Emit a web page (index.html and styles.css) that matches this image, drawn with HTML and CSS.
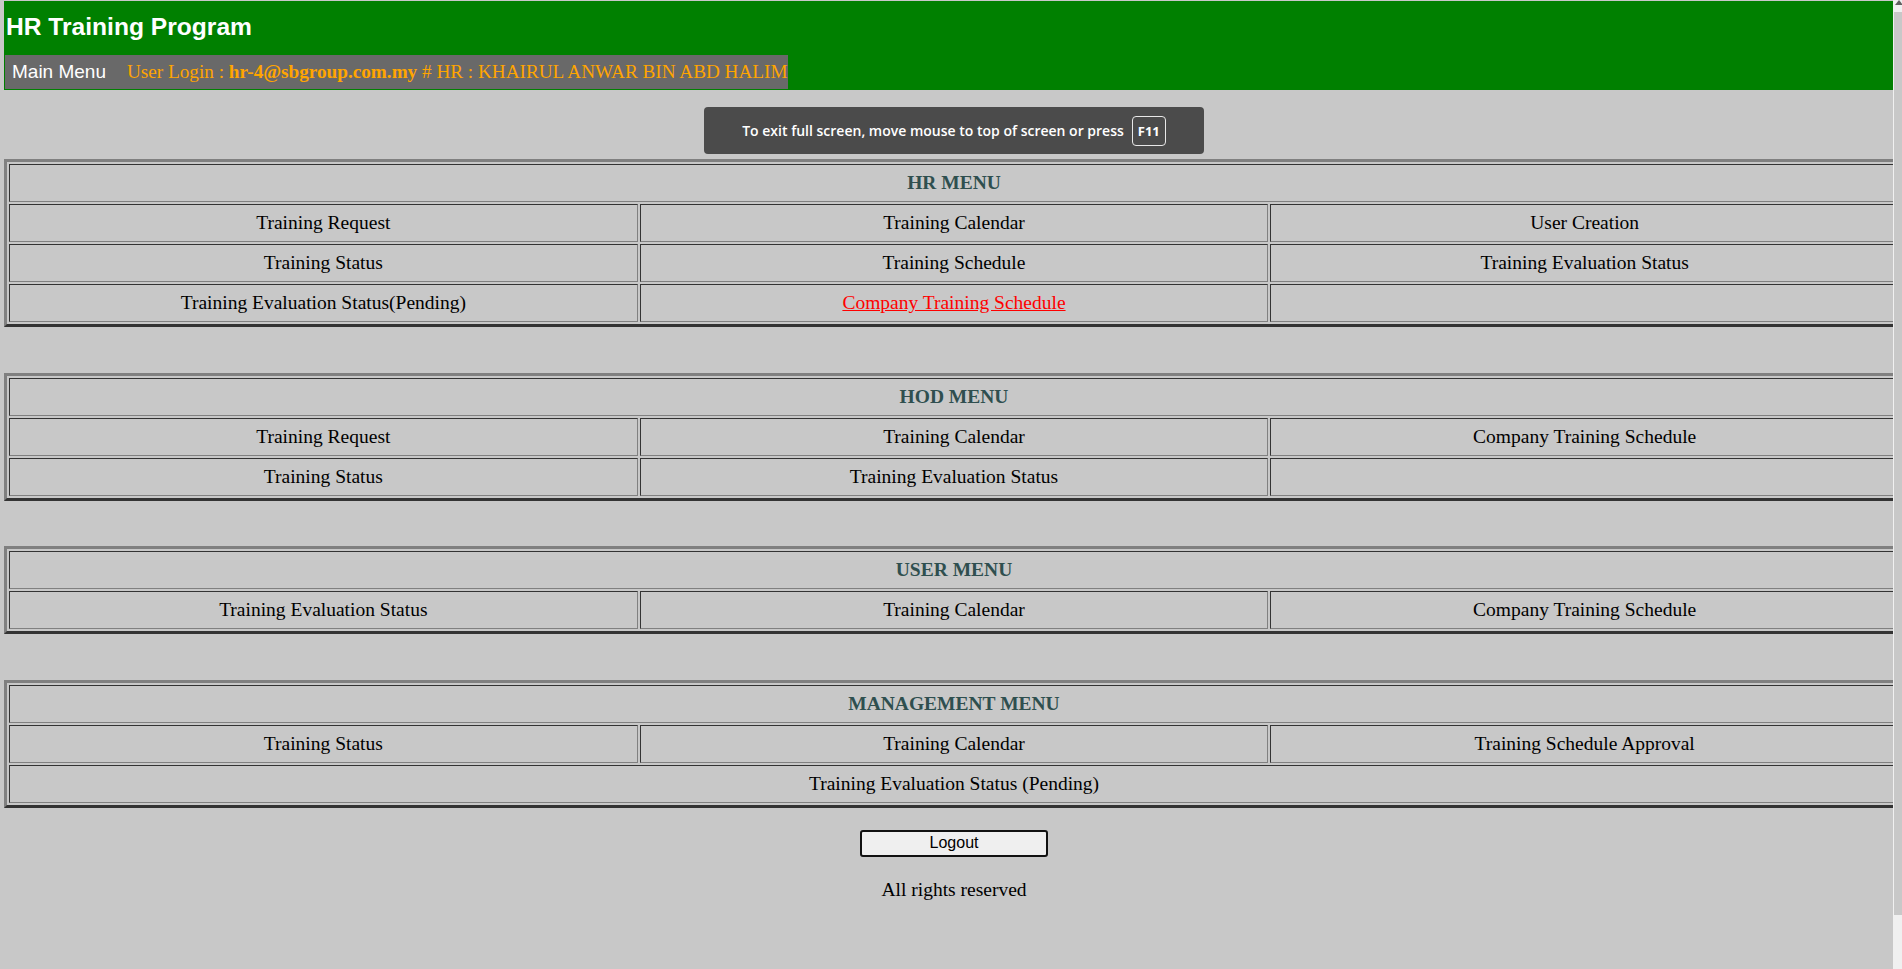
FILE: index.html
```html
<!DOCTYPE html>
<html lang="en">
<head>
<meta charset="utf-8">
<title>HR Training Program</title>
<link rel="stylesheet" href="styles.css">
</head>
<body>
<div class="screen">
  <div class="page">
    <div class="content">
      <header class="topbar">
        <div class="title">HR Training Program</div>
        <div class="navbar">
          <span class="nav-main">Main Menu</span>
          <span class="login">User Login : <b>hr-4@sbgroup.com.my</b> # HR : KHAIRUL ANWAR BIN ABD HALIM</span>
        </div>
      </header>

      <div class="toast">
        <span class="toast-text">To exit full screen, move mouse to top of screen or press</span>
        <span class="key">F11</span>
      </div>

      <table class="menu first">
        <tr><th colspan="3">HR MENU</th></tr>
        <tr><td>Training Request</td><td>Training Calendar</td><td>User Creation</td></tr>
        <tr><td>Training Status</td><td>Training Schedule</td><td>Training Evaluation Status</td></tr>
        <tr><td>Training Evaluation Status(Pending)</td><td><a class="link" href="#">Company Training Schedule</a></td><td></td></tr>
      </table>

      <table class="menu">
        <tr><th colspan="3">HOD MENU</th></tr>
        <tr><td>Training Request</td><td>Training Calendar</td><td>Company Training Schedule</td></tr>
        <tr><td>Training Status</td><td>Training Evaluation Status</td><td></td></tr>
      </table>

      <table class="menu">
        <tr><th colspan="3">USER MENU</th></tr>
        <tr><td>Training Evaluation Status</td><td>Training Calendar</td><td>Company Training Schedule</td></tr>
      </table>

      <table class="menu">
        <tr><th colspan="3">MANAGEMENT MENU</th></tr>
        <tr><td>Training Status</td><td>Training Calendar</td><td>Training Schedule Approval</td></tr>
        <tr><td colspan="3">Training Evaluation Status (Pending)</td></tr>
      </table>

      <div class="footer">
        <button class="logout" type="button">Logout</button>
        <p class="rights">All rights reserved</p>
      </div>
    </div>
  </div>
  <div class="scrollbar">
    <div class="sb-edge"></div>
    <div class="sb-main">
      <div class="sb-top">
        <svg class="sb-arrow" width="8" height="6" viewBox="0 0 8 6"><path d="M5 0 L9 5 L1 5 Z" fill="#606060"/></svg>
      </div>
      <div class="sb-thumb"></div>
      <div class="sb-track"></div>
    </div>
  </div>
</div>
</body>
</html>
```

FILE: styles.css
```css
html, body {
  margin: 0;
  padding: 0;
}

body {
  background: #c8c8c8;
  overflow: hidden;
  font-family: "Liberation Serif", "Times New Roman", serif;
}

.screen {
  display: flex;
  height: 969px;
  overflow: hidden;
}

.page {
  flex: 1;
  min-width: 0;
  overflow: hidden;
}

.content {
  position: relative;
  width: 1900px;
  margin-left: 4px;
  padding-top: 1px;
}

/* header */
.topbar {
  background: #008000;
  padding: 12px 1px 1px 1px;
}

.title {
  font-family: "Liberation Sans", Arial, sans-serif;
  font-weight: bold;
  font-size: 24.6px;
  line-height: 28px;
  color: #ffffff;
  padding-left: 1px;
  margin-bottom: 14px;
}

.navbar {
  display: flex;
  align-items: center;
  gap: 21px;
  width: fit-content;
  height: 34px;
  background: #696969;
  padding: 0 1px 0 7px;
}

.nav-main {
  font-family: "Liberation Sans", Arial, sans-serif;
  font-size: 19px;
  color: #ffffff;
}

.login {
  font-family: "Liberation Serif", "Times New Roman", serif;
  font-size: 19.2px;
  color: #ffa500;
  white-space: nowrap;
}

/* fullscreen notice overlay */
.toast {
  position: absolute;
  top: 107px;
  left: 50%;
  transform: translateX(-50%);
  width: 500px;
  height: 47px;
  box-sizing: border-box;
  background: #4b4b4b;
  border-radius: 4px;
  display: flex;
  align-items: center;
  justify-content: center;
  gap: 8px;
  font-family: "Open Sans", "Liberation Sans", sans-serif;
  font-weight: 600;
  font-size: 14px;
  color: #ffffff;
}

.key {
  display: flex;
  align-items: center;
  justify-content: center;
  width: 34px;
  height: 30px;
  box-sizing: border-box;
  border: 1px solid #e8e8e8;
  border-radius: 4px;
  font-weight: 700;
  font-size: 13px;
}

/* menu tables */
.menu {
  width: 1900px;
  table-layout: fixed;
  border-collapse: separate;
  border-spacing: 2px;
  border: 3px solid;
  border-color: #808080 #333333 #333333 #808080;
  margin-top: 45.6px;
}

.menu.first {
  margin-top: 69px;
}

.menu th,
.menu td {
  border: 1px solid;
  border-color: #333333 #808080 #808080 #333333;
  padding: 0;
  height: 36px;
  line-height: 36px;
  text-align: center;
  font-family: "Liberation Serif", "Times New Roman", serif;
  font-size: 19.5px;
  color: #000000;
  white-space: nowrap;
}

.menu th {
  color: #2f4f4f;
  font-weight: bold;
}

.link {
  color: #ff0000;
  text-decoration: underline;
}

/* footer */
.footer {
  display: flex;
  flex-direction: column;
  align-items: center;
  padding-top: 22px;
}

.logout {
  width: 188px;
  height: 27px;
  box-sizing: border-box;
  background: #efefef;
  border: 2px solid #111111;
  border-radius: 3px;
  font-family: "Liberation Sans", Arial, sans-serif;
  font-size: 16px;
  color: #000000;
  padding: 0;
}

.rights {
  margin: 22px 0 0 0;
  font-size: 19.5px;
  line-height: 22px;
  color: #000000;
}

/* scrollbar strip at right edge */
.scrollbar {
  flex: none;
  width: 9px;
  display: flex;
  height: 969px;
}

.sb-edge {
  width: 1px;
  background: #f0f0f0;
}

.sb-main {
  flex: 1;
  display: flex;
  flex-direction: column;
}

.sb-top {
  height: 12px;
  background: #f0f0f0;
  overflow: hidden;
}

.sb-arrow {
  display: block;
}

.sb-thumb {
  height: 903px;
  background: #c8c8c8;
}

.sb-track {
  flex: 1;
  background: #f0f0f0;
}
```
